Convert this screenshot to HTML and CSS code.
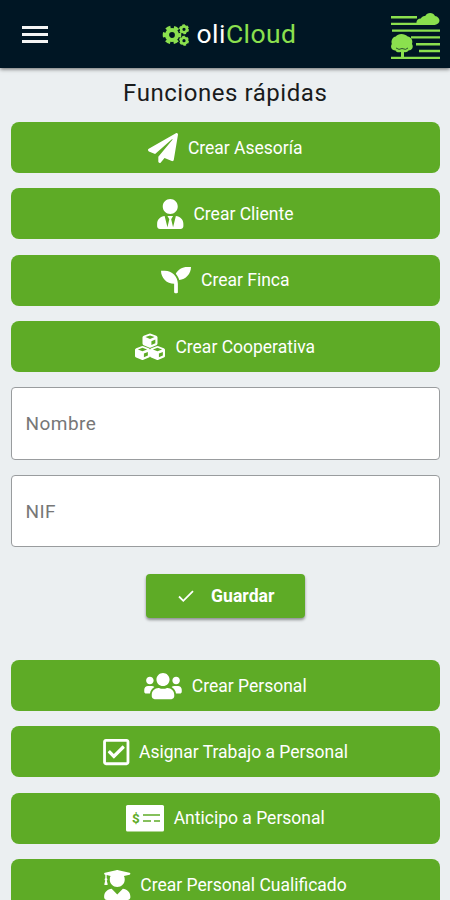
FILE: index.html
```
<!DOCTYPE html>
<html lang="es">
<head>
	<meta charset="utf-8">
	<meta name="viewport" content="width=device-width, initial-scale=1">
	<title>oliCloud</title>
	<link rel="stylesheet" href="styles.css">
</head>
<body>

	<header class="toolbar">
		<button class="menu" aria-label="Menú"><span></span><span></span><span></span></button>
		<div class="brand">
			<svg class="cogs" viewBox="0 0 28 24">
				<g fill="none" stroke="currentColor">
					<circle cx="10" cy="12" r="5" stroke-width="4.200"/>
					<circle cx="10" cy="12" r="7.600" stroke-width="3.400" stroke-dasharray="4.6 3.36" stroke-dashoffset="2.300"/>
					<circle cx="22" cy="6.300" r="2.900" stroke-width="2.600"/>
					<circle cx="22" cy="6.300" r="4.200" stroke-width="1.600" stroke-dasharray="2.6 1.8"/>
					<circle cx="22" cy="17.700" r="2.900" stroke-width="2.600"/>
					<circle cx="22" cy="17.700" r="4.200" stroke-width="1.600" stroke-dasharray="2.6 1.8"/>
				</g>
			</svg>
			<span class="name">oli<b>Cloud</b></span>
		</div>
		<svg class="logo" viewBox="0 0 50 48">
			<g fill="currentColor">
				<path d="M1 4h26v2.4H1zM1 10.7h30v2.4H1zM2 17.4h48v2.4H2zM21 24.2h29v2.4H21zM26 31h24v2.4H26zM29 37.8h21v2.4H29zM1 44.7h49v2.4H1z"/>
				<path d="M27 13c-1.500-3 0-6.500 3.800-6.500 1-2 2.600-2.800 4.400-2.500C37-.2 43.500 0 45 4c5.500.8 6.500 8-.3 9z"/>
				<path d="M11 45v-5c-3 .8-5 0-5.500-1.500C1 38 .2 34.500 1.800 32c-1-4 1-7 4-7.500 2-3.500 9-3.500 12 0 3.500.6 5.400 4 4.200 7.500 2 3-.2 6.500-3.500 6.500-1 1.700-3 2-4.500 1.500v5z"/>
			</g>
			<path d="M6 36q3 2.500 6 .5q4 2 6-.5" fill="none" stroke="#001624" stroke-width=".7"/>
		</svg>
	</header>

	<main>
		<h1>Funciones rápidas</h1>

		<div class="actions">
			<button class="action">
				<svg viewBox="0 0 512 512"><path d="M476 3.2L12.500 270.600c-18.100 10.400-15.800 35.600 2.200 43.200L121 358.400l287.300-253.200c5.500-4.900 13.300 2.600 8.600 8.300L176 407v80.500c0 23.600 28.500 32.900 42.500 15.800L282 426l124.600 52.200c14.200 6 30.400-2.900 33-18.200l72-432C515 7.800 493.300-6.800 476 3.200z"/></svg>
				<span>Crear Asesoría</span>
			</button>
			<button class="action">
				<svg class="narrow" viewBox="0 0 448 512"><path d="M224 256c70.700 0 128-57.300 128-128S294.700 0 224 0 96 57.300 96 128s57.300 128 128 128zm95.800 32.600L272 480l-32-136 32-56h-96l32 56-32 136-47.800-191.400C56.900 292 0 350.300 0 422.400V464c0 26.500 21.500 48 48 48h352c26.500 0 48-21.500 48-48v-41.600c0-72.100-56.900-130.400-128.200-133.800z"/></svg>
				<span>Crear Cliente</span>
			</button>
			<button class="action">
				<svg viewBox="0 0 512 512"><path d="M64 96H0c0 123.700 100.300 224 224 224v144c0 8.800 7.200 16 16 16h32c8.800 0 16-7.200 16-16V320C288 196.300 187.700 96 64 96zm384-64c-84.200 0-157.400 46.500-195.700 115.200 27.700 30.200 48.200 66.900 59 107.600C424 243.100 512 147.900 512 32h-64z"/></svg>
				<span>Crear Finca</span>
			</button>
			<button class="action">
				<svg viewBox="0 0 32 32">
					<defs>
						<g id="cube">
							<path d="M1.500 3L7.200.9q1-.4 2 0l5.700 2.100q1.300.5 1.300 1.700v6.600q0 1.200-1.200 1.700l-5.800 2.500q-1 .4-2 0L1.400 13Q.2 12.500.2 11.300V4.700Q.2 3.500 1.500 3z"/>
							<path class="cut" d="M3.300 4.400L8.200 2.700l4.900 1.700-4.900 2zM9.700 8.800l4.200-1.700v3.800l-4.200 1.900z"/>
						</g>
					</defs>
					<use href="#cube" x="7.800" y="1"/>
					<use href="#cube" x="-.2" y="14.200"/>
					<use href="#cube" x="15.800" y="14.200"/>
				</svg>
				<span>Crear Cooperativa</span>
			</button>
		</div>

		<form class="form" onsubmit="return false">
			<input type="text" placeholder="Nombre">
			<input type="text" placeholder="NIF">
			<button class="save">
				<svg viewBox="0 0 20 20"><path d="M3 10.500l4.300 4.300L17 5.200"/></svg>
				<span>Guardar</span>
			</button>
		</form>

		<div class="actions">
			<button class="action">
				<svg class="wide" viewBox="0 0 640 512"><path d="M96 224c35.300 0 64-28.700 64-64s-28.700-64-64-64-64 28.700-64 64 28.700 64 64 64zm448 0c35.300 0 64-28.700 64-64s-28.700-64-64-64-64 28.700-64 64 28.700 64 64 64zm32 32h-64c-17.600 0-33.500 7.100-45.100 18.600 40.300 22.100 68.900 62 75.100 109.400h66c17.700 0 32-14.300 32-32v-32c0-35.300-28.700-64-64-64zm-256 0c61.900 0 112-50.100 112-112S381.900 32 320 32 208 82.100 208 144s50.100 112 112 112zm76.800 32h-8.300c-20.800 10-43.900 16-68.500 16s-47.600-6-68.500-16h-8.300C179.600 288 128 339.600 128 403.200V432c0 26.500 21.500 48 48 48h288c26.500 0 48-21.500 48-48v-28.800c0-63.600-51.600-115.200-115.200-115.200zm-223.700-13.400C161.500 263.100 145.600 256 128 256H64c-35.300 0-64 28.700-64 64v32c0 17.700 14.300 32 32 32h65.900c6.300-47.400 34.900-87.300 75.200-109.400z"/></svg>
				<span>Crear Personal</span>
			</button>
			<button class="action">
				<svg class="narrow" viewBox="0 0 448 512"><path d="M400 32H48C21.490 32 0 53.490 0 80v352c0 26.510 21.490 48 48 48h352c26.510 0 48-21.490 48-48V80c0-26.510-21.490-48-48-48zm0 400H48V80h352v352zm-35.864-241.724L191.547 361.480c-4.705 4.667-12.303 4.637-16.970-.068l-90.781-91.516c-4.667-4.705-4.637-12.303.069-16.971l22.719-22.536c4.705-4.667 12.303-4.637 16.970.069l59.792 60.277 141.352-140.216c4.705-4.667 12.303-4.637 16.970.068l22.536 22.718c4.667 4.706 4.637 12.304-.068 16.971z"/></svg>
				<span>Asignar Trabajo a Personal</span>
			</button>
			<button class="action">
				<svg class="wide" viewBox="0 0 38 30">
					<rect y="2" width="38" height="26.500" rx="1.600"/>
					<text class="cut" x="6" y="19.500" font-size="13.500" font-weight="700">$</text>
					<g opacity=".75"><path class="cut" d="M17 11h17v2H17zM17 17h8v2h-8zM28 17h6v2h-6z"/></g>
				</svg>
				<span>Anticipo a Personal</span>
			</button>
			<button class="action">
				<svg class="narrow" viewBox="0 0 448 512"><path d="M319.400 320.600L224 416l-95.400-95.400C57.100 323.700 0 382.200 0 454.400v9.600c0 26.500 21.500 48 48 48h352c26.500 0 48-21.500 48-48v-9.600c0-72.200-57.100-130.700-128.600-133.800zM13.600 79.800l6.400 1.500v58.400c-7 4.200-12 11.500-12 20.300 0 8.400 4.600 15.400 11.100 19.700L3.500 242c-1.700 6.900 2.100 14 7.600 14h41.800c5.500 0 9.300-7.100 7.600-14l-15.600-62.300C51.400 175.400 56 168.400 56 160c0-8.800-5-16.100-12-20.300V87.100l66 15.900c-8.600 17.200-14 36.400-14 57 0 70.700 57.300 128 128 128s128-57.300 128-128c0-20.600-5.300-39.800-14-57l96.300-23.200c18.200-4.400 18.200-27.100 0-31.500l-190.400-46c-13-3.100-26.700-3.100-39.700 0L13.600 48.200c-18.100 4.400-18.100 27.200 0 31.600z"/></svg>
				<span>Crear Personal Cualificado</span>
			</button>
		</div>
	</main>

</body>
</html>
```
FILE: styles.css
```
* {
  box-sizing: border-box;
}
html, body {
  height: 100%;
  margin: 0;
}
body {
  background-color: #ebeff1;
  font-family: Roboto, sans-serif;
  overflow: hidden;
}
button {
  border: 0;
  padding: 0;
  font-family: inherit;
  cursor: pointer;
}

/* barra superior */
.toolbar {
  position: relative;
  display: flex;
  align-items: center;
  justify-content: space-between;
  height: 68px;
  padding: 0 10px 0 22px;
  background-color: #001624;
  box-shadow: 0 1px 4px rgba(0, 0, 0, .6);
}
.menu {
  display: flex;
  flex-direction: column;
  gap: 4px;
  width: 46px;
  background: none;
}
.menu span {
  width: 26px;
  height: 3px;
  background-color: #f4f4f4;
}
.brand {
  display: flex;
  align-items: center;
  gap: 7px;
  color: #8be04e;
}
.cogs {
  width: 28px;
  height: 24px;
  margin-top: 2px;
}
.name {
  color: #fff;
  font-size: 26.500px;
  line-height: 30px;
  letter-spacing: .45px;
}
.name b {
  color: #8be04e;
  font-weight: 400;
}
.logo {
  width: 50px;
  height: 48px;
  margin-top: 4px;
  color: #8be04e;
}

main {
  padding: 10px 10px 0 10.500px;
}
h1 {
  margin: 0 0 14px;
  padding-top: 1px;
  color: #191b1c;
  font-size: 24px;
  font-weight: 400;
  line-height: 29px;
  letter-spacing: .55px;
  text-align: center;
}

/* botones */
.actions {
  display: flex;
  flex-direction: column;
  gap: 15.400px;
}
.action {
  display: flex;
  align-items: center;
  justify-content: center;
  gap: 10px;
  flex: none;
  height: 51px;
  border-radius: 8px;
  background-color: #5eab26;
  color: #fff;
  font-size: 17.500px;
}
.action svg {
  width: 30px;
  height: 30px;
  fill: #fff;
  overflow: visible;
}
.action svg.narrow {
  width: 26.500px;
}
.action svg.wide {
  width: 38px;
}
.action .cut {
  fill: #5eab26;
}

/* formulario */
.form {
  display: flex;
  flex-direction: column;
  align-items: center;
  gap: 15px;
  padding: 15.300px 0 41.800px;
}
.form input {
  width: 100%;
  height: 72.400px;
  padding: 0 14px;
  border: 1px solid #999c9e;
  border-radius: 4px;
  background-color: #fff;
  font-family: inherit;
  font-size: 19px;
  letter-spacing: .45px;
}
.form input::placeholder {
  color: #777;
}
.save {
  display: flex;
  align-items: center;
  justify-content: center;
  gap: 15px;
  width: 159px;
  height: 44px;
  margin-top: 12px;
  border-radius: 4px;
  background-color: #5eab26;
  box-shadow: 0 2px 3px rgba(0, 0, 0, .4);
  color: #fff;
  font-size: 17.600px;
  font-weight: 700;
}
.save svg {
  width: 20px;
  height: 20px;
  fill: none;
  stroke: #fff;
  stroke-width: 1.800;
}
```
